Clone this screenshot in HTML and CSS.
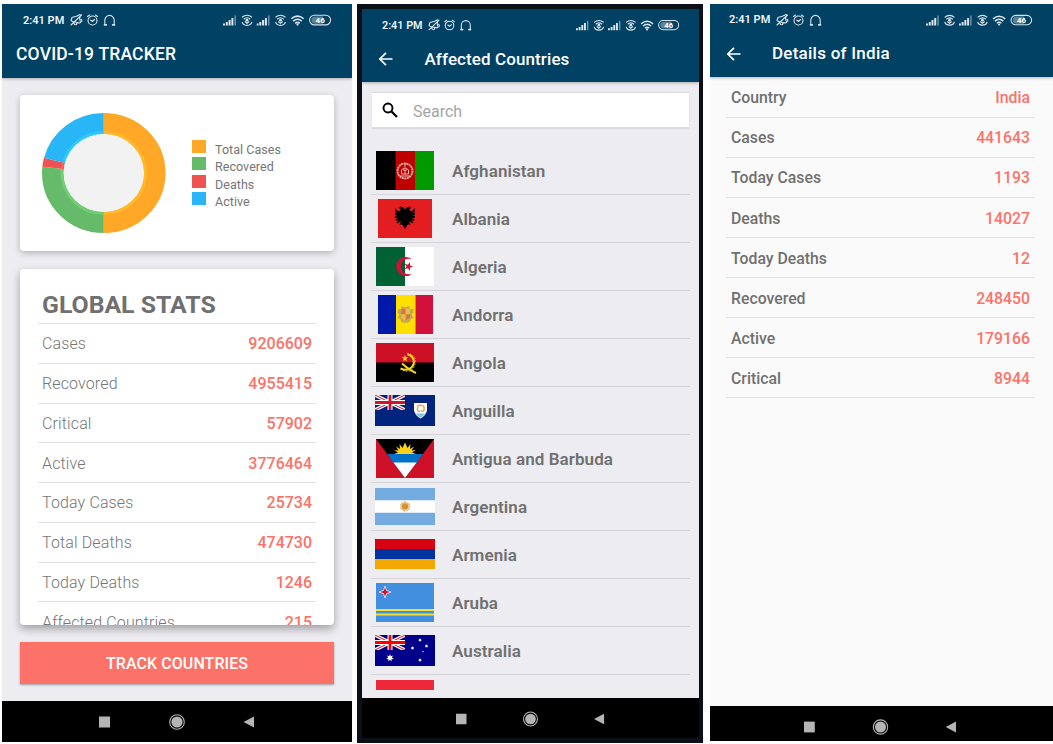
FILE: index.html
```html
<!DOCTYPE html>
<html lang="en">
<head>
<meta charset="utf-8">
<title>COVID-19 Tracker</title>
<link rel="stylesheet" href="styles.css">
</head>
<body>
<svg class="defs" aria-hidden="true">
  <symbol id="left-icons" viewBox="0 0 46 14">
    <g fill="none" stroke="#dce6eb" stroke-width="1.1" stroke-linecap="round" stroke-linejoin="round">
      <path d="M2 4.500 7 3l3-1.500.8 1L9.500 5l1 4.500-1.200.5L2.500 8.500 1 7.500zM3.500 9l1 2.500 2 .2.500-2M1 12 11.500 2M11 6.200q1.300.8.800 2.500"/>
      <circle cx="22.500" cy="7.500" r="4.500"/><path d="M17.500 3.500 19.500 2M25.500 2l2 1.500M20.700 7l1.800 1.500L24.500 6.500"/>
      <path d="M34.800 11V7.300a4.700 4.900 0 0 1 9.400 0V11"/><path d="M34.500 11.800h1.800M42.700 11.800h1.800" stroke-width="1.700"/>
    </g>
  </symbol>
  <symbol id="signal" viewBox="0 0 14 14">
    <g fill="#dce6eb"><path d="M0 10.500h2v2H0zM2.800 9h2v3.500h-2zM5.600 7h2v5.500h-2zM8.400 5h2v7.500h-2z"/><path opacity=".5" d="M11.500 2.500H13v10h-1.500z"/></g>
  </symbol>
  <symbol id="hotspot" viewBox="0 0 12 14">
    <g fill="none" stroke="#dce6eb" stroke-width="1.200"><path d="M1 4.300Q6 .2 11 4.300M2.700 6.200Q6 3.300 9.300 6.200M1.200 9Q1.800 12.300 6 12.300T10.800 9M3.800 8.500 6 10.300 8.200 8.500"/></g><circle cx="6" cy="7.200" r="1.400" fill="#dce6eb"/>
  </symbol>
  <symbol id="right-icons" viewBox="0 0 109 14">
    <use href="#signal" x="0" width="14" height="14"/>
    <use href="#hotspot" x="18" width="12" height="14"/>
    <use href="#signal" x="33.500" width="14" height="14"/>
    <use href="#hotspot" x="51.500" width="12" height="14"/>
    <g fill="none" stroke="#dce6eb" stroke-width="1.500"><path d="M68.300 5.800q6.200-5.300 12.400 0M70.200 8.100q4.300-3.700 8.600 0M72.200 10.300q2.300-1.900 4.600 0"/></g>
    <circle cx="74.500" cy="11.600" r="1.100" fill="#dce6eb"/>
    <rect x="86.600" y="2.300" width="21" height="9.600" rx="4.800" fill="none" stroke="#d7e2e8" stroke-width="1.100"/>
    <path d="M92 3.500h8v7.200h-8a3.600 3.600 0 0 1 0-7.200z" fill="#5d8298"/>
  </symbol>
  <symbol id="back" viewBox="0 0 16 16"><path d="M14.500 8H2M8 1.800 1.800 8 8 14.200" fill="none" stroke="#fff" stroke-width="1.700"/></symbol>
  <symbol id="nav" viewBox="0 0 156 18">
    <rect x="0" y="3.500" width="11" height="11" fill="#b5b5b5"/>
    <circle cx="78" cy="9" r="5.600" fill="#b5b5b5"/><circle cx="78" cy="9" r="7.300" fill="none" stroke="#b5b5b5" stroke-width="1.100"/>
    <path d="M155 3.500v11L144.500 9z" fill="#b5b5b5"/>
  </symbol>
  <symbol id="union" viewBox="0 0 30 15">
    <path d="M0 0 30 15M30 0 0 15" stroke="#fff" stroke-width="3.400"/>
    <path d="M0 0 30 15M30 0 0 15" stroke="currentColor" stroke-width="1"/>
    <path d="M15 0v15M0 7.500h30" stroke="#fff" stroke-width="5"/>
    <path d="M15 0v15M0 7.500h30" stroke="currentColor" stroke-width="2.800"/>
  </symbol>
  <symbol id="star7" viewBox="-10 -10 20 20"><path fill="#fff" d="M0-10 2-4.200 7.800-6.200 4.500-1 9.700 2.200 3.600 2.900 4.300 9 0 4.600-4.300 9-3.600 2.900-9.700 2.200-4.500-1-7.800-6.200-2-4.200z"/></symbol>
</svg>

<main class="screens">
  <section class="phone home">
    <header class="appbar">
      <div class="status"><span class="time">2:41 PM</span><svg class="left-icons"><use href="#left-icons"/></svg><svg class="right-icons" viewBox="0 0 109 14"><use href="#right-icons" width="109" height="14"/><text x="97.200" y="9.900" class="battery-text">46</text></svg></div>
      <h1 class="title">COVID-19 TRACKER</h1>
    </header>
    <div class="home-body">
      <div class="card chart-card">
        <svg class="donut" viewBox="0 0 120 120" preserveAspectRatio="none">
          <g fill="none" stroke-width="21" transform="rotate(-90 60 60)">
            <circle cx="60" cy="60" r="49.500" pathLength="360" stroke="#ffa726" stroke-dasharray="180 180"/>
            <circle cx="60" cy="60" r="49.500" pathLength="360" stroke="#66bb6a" stroke-dasharray="96 264" stroke-dashoffset="-180"/>
            <circle cx="60" cy="60" r="49.500" pathLength="360" stroke="#ef5350" stroke-dasharray="8.800 351.200" stroke-dashoffset="-276"/>
            <circle cx="60" cy="60" r="49.500" pathLength="360" stroke="#29b6f6" stroke-dasharray="75.200 284.800" stroke-dashoffset="-284.800"/>
          </g>
          <g fill="none" stroke-width="3" transform="rotate(-90 60 60)">
            <circle cx="60" cy="60" r="40.500" pathLength="360" stroke="#ffb829" stroke-dasharray="180 180"/>
            <circle cx="60" cy="60" r="40.500" pathLength="360" stroke="#70cf75" stroke-dasharray="96 264" stroke-dashoffset="-180"/>
            <circle cx="60" cy="60" r="40.500" pathLength="360" stroke="#ff5b58" stroke-dasharray="8.800 351.200" stroke-dashoffset="-276"/>
            <circle cx="60" cy="60" r="40.500" pathLength="360" stroke="#2dc8ff" stroke-dasharray="75.200 284.800" stroke-dashoffset="-284.800"/>
          </g>
          <circle cx="60" cy="60" r="39" fill="#f2f2f2"/>
        </svg>
        <ul class="legend">
          <li><i class="swatch orange"></i>Total Cases</li>
          <li><i class="swatch green"></i>Recovered</li>
          <li><i class="swatch red"></i>Deaths</li>
          <li><i class="swatch blue"></i>Active</li>
        </ul>
      </div>
      <div class="card stats-card">
        <h2 class="stats-title">GLOBAL STATS</h2>
        <dl class="rows">
          <div class="row"><dt>Cases</dt><dd>9206609</dd></div>
          <div class="row"><dt>Recovored</dt><dd>4955415</dd></div>
          <div class="row"><dt>Critical</dt><dd>57902</dd></div>
          <div class="row"><dt>Active</dt><dd>3776464</dd></div>
          <div class="row"><dt>Today Cases</dt><dd>25734</dd></div>
          <div class="row"><dt>Total Deaths</dt><dd>474730</dd></div>
          <div class="row"><dt>Today Deaths</dt><dd>1246</dd></div>
          <div class="row"><dt>Affected Countries</dt><dd>215</dd></div>
        </dl>
      </div>
      <button class="track">TRACK COUNTRIES</button>
    </div>
    <nav class="navbar"><svg class="nav-icons"><use href="#nav"/></svg></nav>
  </section>

  <section class="phone countries">
    <header class="appbar">
      <div class="status"><span class="time">2:41 PM</span><svg class="left-icons"><use href="#left-icons"/></svg><svg class="right-icons" viewBox="0 0 109 14"><use href="#right-icons" width="109" height="14"/><text x="97.200" y="9.900" class="battery-text">46</text></svg></div>
      <div class="bar-title"><svg class="back"><use href="#back"/></svg><h1 class="title">Affected Countries</h1></div>
    </header>
    <div class="countries-body">
      <div class="search"><svg class="search-icon" viewBox="0 0 16 16"><circle cx="6" cy="6" r="4.500" fill="none" stroke="#000" stroke-width="1.900"/><path d="m9.500 9.500 5.500 5.500" stroke="#000" stroke-width="2.300"/></svg><span>Search</span></div>
      <ul class="list">
        <li><span class="flag"><svg width="58" height="39" viewBox="0 0 58 39"><path d="M0 0h20v39H0z"/><path fill="#be0000" d="M19.500 0H39v39H19.500z"/><path fill="#009900" d="M39 0h19v39H39z"/><g fill="none" stroke="#e8b9b0"><circle cx="29" cy="20" r="7.500" stroke-width="1.800" stroke-dasharray="2 .6"/><path d="M25.500 23v-4q3.500-4 7 0v4zM29 13v3M24 25h10M27 19h4M29 19v4"/></g></svg></span><b>Afghanistan</b></li>
        <li><span class="flag"><svg width="54" height="39" viewBox="0 0 54 39"><path fill="#e41e20" d="M0 0h54v39H0z"/><path d="m27 10.500-1.500-2-3-1-2 1.500 2.500 1-1.500 2-1.500 0-3-3 .3 4 2.200 1.500-2.500-.5 0 2 3 1-3 0 .2 2 3-.2-2.700 1.700.5 1.500 3-1.200-2.500 3 1 .6 3.500-2.400-1.500 4 2-.8 1.500 1.300 2 3.500 2-3.500 1.500-1.300 2 .8-1.500-4 3.500 2.400 1-.6-2.500-3 3 1.200.5-1.500-2.700-1.700 3 .2.200-2-3 0 3-1 0-2-2.500.5 2.200-1.500.3-4-3 3-1.500 0-1.500-2 2.500-1-2-1.500-3 1z"/></svg></span><b>Albania</b></li>
        <li><span class="flag"><svg width="58" height="39" viewBox="0 0 58 39"><path fill="#fff" d="M0 0h58v39H0z"/><path fill="#006233" d="M0 0h29v39H0z"/><path fill="#d21034" d="M36.500 12.600a9.600 9.600 0 1 0 0 13.800 7.800 7.800 0 1 1 0-13.800z"/><path fill="#d21034" d="m37.200 19.500-3.200 1.100v3.400l-2.100-2.700-3.300 1 2-2.800-2-2.800 3.300 1 2.100-2.700v3.400z"/></svg></span><b>Algeria</b></li>
        <li><span class="flag"><svg width="55" height="39" viewBox="0 0 55 39"><path fill="#0018a8" d="M0 0h18v39H0z"/><path fill="#fedf00" d="M18 0h19.500v39H18z"/><path fill="#d0103a" d="M37.500 0H55v39H37.500z"/><path fill="#c7a850" d="M20 14h3l1-3 3.500 1.500L31 11l1 3h3.500v4l-2 1 2 4-3 1-.5 3-4.500 1-4.500-1-.5-3-3-1 2-4-2-1z"/><path fill="#d9704a" d="M23.500 14h3.500v5h-3.500zM28.500 19.500H32v3l-3.500 2.500z"/><path fill="#efbd45" d="M28 14h4v5h-4zM23.500 19.500H27V25l-3.500-2z"/></svg></span><b>Andorra</b></li>
        <li><span class="flag"><svg width="58" height="39" viewBox="0 0 58 39"><path d="M0 0h58v39H0z"/><path fill="#cc1126" d="M0 0h58v19.500H0z"/><g fill="none" stroke="#f9d616"><path d="M31.500 11.500c6 1 8.500 8 4 13q-4.500 4-11 1" stroke-width="2"/><path d="M31 10.500q10 1 8 10.500t-12 6.500" stroke-dasharray="1.500 1.500"/><path d="M26 20.500q8 7 14 9.500" stroke-width="2"/></g><path fill="#f9d616" d="m29 12 .8 2.200 2.400.1-1.900 1.500.7 2.400-2-1.300-2 1.300.7-2.400-1.900-1.500 2.400-.1z"/></svg></span><b>Angola</b></li>
        <li><span class="flag"><svg width="60" height="31" viewBox="0 0 60 31"><path fill="#00247d" d="M0 0h60v31H0z"/><use href="#union" width="30" height="15" color="#cf142b"/><path fill="#fff" d="M39 8h13v7q-.5 5-6.500 8.500Q39.500 20 39 15z"/><path fill="#83c3dd" d="M40.500 18.500h10q-2 2.500-5 4.300-3-1.800-5-4.300z"/><path d="M42 11q5-2 7 1M43 12q-2 5 2 4M49 12q1 5-3 4" fill="none" stroke="#f0a43a" stroke-width="1.500"/></svg></span><b>Anguilla</b></li>
        <li><span class="flag"><svg width="58" height="39" viewBox="0 0 58 39"><path fill="#ce1126" d="M0 0h58v39H0z"/><path d="M0 0h58L29 39z"/><path fill="#fcd116" d="m18 15 4-1.500-4-2.500 4.500.5-2.500-4 4 2.500L23.500 5l3 4L29 3.500 31.500 9l3-4-.5 5 4-2.500-2.500 4 4.500-.5-4 2.500 4 1.500z"/><path fill="#0072c6" d="M11.200 15h35.600l-6.200 9H17.400z"/><path fill="#fff" d="M17.400 23.500h23.200L29 39z"/></svg></span><b>Antigua and Barbuda</b></li>
        <li><span class="flag"><svg width="60" height="37" viewBox="0 0 60 37"><path fill="#74acdf" d="M0 0h60v37H0z"/><path fill="#fff" d="M0 12.300h60v12.400H0z"/><circle cx="30" cy="18.500" r="4.200" fill="none" stroke="#dca450" stroke-width="1.800" stroke-dasharray=".8 .5"/><circle cx="30" cy="18.500" r="3.200" fill="#d59031"/></svg></span><b>Argentina</b></li>
        <li><span class="flag"><svg width="60" height="30" viewBox="0 0 60 30"><path fill="#d90012" d="M0 0h60v10H0z"/><path fill="#0033a0" d="M0 10h60v10H0z"/><path fill="#f2a800" d="M0 20h60v10H0z"/></svg></span><b>Armenia</b></li>
        <li><span class="flag"><svg width="58" height="39" viewBox="0 0 58 39"><path fill="#418fde" d="M0 0h58v39H0z"/><path d="M0 27h58M0 31.500h58" stroke="#f4df30" stroke-width="2"/><path fill="#d21034" stroke="#fff" stroke-width=".7" d="m9 3 1.500 4.500L15 9l-4.500 1.500L9 15l-1.500-4.500L3 9l4.500-1.500z"/></svg></span><b>Aruba</b></li>
        <li><span class="flag"><svg width="60" height="31" viewBox="0 0 60 31"><path fill="#00008b" d="M0 0h60v31H0z"/><use href="#union" width="30" height="15" color="#f00"/><use href="#star7" x="11" y="19" width="8" height="8"/><use href="#star7" x="43" y="3" width="4" height="4"/><use href="#star7" x="35.500" y="11" width="4" height="4"/><use href="#star7" x="49.500" y="9" width="4" height="4"/><use href="#star7" x="43" y="23" width="4" height="4"/><use href="#star7" x="47" y="15.500" width="2" height="2"/></svg></span><b>Australia</b></li>
        <li><span class="flag"><svg width="58" height="39" viewBox="0 0 58 39"><path fill="#ed2939" d="M0 0h58v10H0z"/></svg></span></li>
      </ul>
    </div>
    <nav class="navbar"><svg class="nav-icons"><use href="#nav"/></svg></nav>
  </section>

  <section class="phone details">
    <header class="appbar">
      <div class="status"><span class="time">2:41 PM</span><svg class="left-icons"><use href="#left-icons"/></svg><svg class="right-icons" viewBox="0 0 109 14"><use href="#right-icons" width="109" height="14"/><text x="97.200" y="9.900" class="battery-text">46</text></svg></div>
      <div class="bar-title"><svg class="back"><use href="#back"/></svg><h1 class="title">Details of India</h1></div>
    </header>
    <dl class="rows details-body">
      <div class="row"><dt>Country</dt><dd>India</dd></div>
      <div class="row"><dt>Cases</dt><dd>441643</dd></div>
      <div class="row"><dt>Today Cases</dt><dd>1193</dd></div>
      <div class="row"><dt>Deaths</dt><dd>14027</dd></div>
      <div class="row"><dt>Today Deaths</dt><dd>12</dd></div>
      <div class="row"><dt>Recovered</dt><dd>248450</dd></div>
      <div class="row"><dt>Active</dt><dd>179166</dd></div>
      <div class="row"><dt>Critical</dt><dd>8944</dd></div>
    </dl>
    <nav class="navbar"><svg class="nav-icons"><use href="#nav"/></svg></nav>
  </section>
</main>
</body>
</html>
```

FILE: styles.css
```css
* { box-sizing: border-box; margin: 0; padding: 0; }
body { background: #fff; font-family: Roboto, "Liberation Sans", sans-serif; overflow: hidden; }
ul { list-style: none; }
svg { display: block; flex: none; }
.defs { width: 0; height: 0; position: absolute; }
.battery-text { font: 700 8px Roboto, sans-serif; fill: #fff; text-anchor: middle; }

.screens { display: flex; align-items: flex-start; width: 1053px; height: 744px; padding: 4px 0 0 2px; }
.phone { display: flex; flex-direction: column; flex: none; overflow: hidden; }

.appbar { background: #004164; color: #fff; flex: none; position: relative; box-shadow: 0 1px 3px rgba(0, 0, 0, .28); }
.status { display: flex; align-items: center; height: 32px; padding: 0 20px 0 21px; }
.time { font-size: 11px; font-weight: 600; color: #eef3f6; width: 47px; white-space: nowrap; }
.left-icons { width: 46px; height: 14px; }
.right-icons { width: 109px; height: 14px; margin-left: auto; }
.title { font-size: 17.500px; font-weight: 500; letter-spacing: .18px; line-height: 37px; white-space: nowrap; }
.bar-title { display: flex; align-items: center; }
.back { width: 16px; height: 16px; }

.navbar { background: #000; flex: none; display: flex; }
.nav-icons { width: 156px; height: 18px; }

.row { display: flex; justify-content: space-between; align-items: center; border-bottom: 1px solid #e2e2e2; font-size: 16px; }
.row dd { color: #fc7268; font-weight: 500; }

.home { width: 350px; height: 738px; background: #edecf1; }
.home .appbar { height: 73.500px; }
.home .title { padding-left: 14px; }
.home-body { flex: 1; padding: 17.500px 18px 0; display: flex; flex-direction: column; }
.card { background: #fff; border-radius: 4px; flex: none; }
.chart-card { height: 156px; display: flex; padding: 18px 0 0 22px; box-shadow: 0 2px 6px rgba(0, 0, 0, .25); }
.donut { width: 123.500px; height: 120px; }
.legend { padding: 27px 0 0 26.500px; font-size: 12.500px; color: #757575; }
.legend li { display: flex; align-items: flex-start; height: 17.300px; line-height: 20px; letter-spacing: .05px; }
.swatch { width: 14px; height: 13px; margin-right: 9px; }
.orange { background: #ffa726; }
.green { background: #66bb6a; }
.red { background: #ef5350; }
.blue { background: #29b6f6; }
.stats-card { height: 356px; margin-top: 18px; padding: 17px 18px 0; overflow: hidden; box-shadow: 0 4px 9px rgba(0, 0, 0, .33); }
.stats-title { font-size: 24.800px; line-height: 37px; height: 38px; padding-left: 4px; color: #707070; border-bottom: 1px solid #e2e2e2; }
.stats-card .row { height: 39.750px; padding: 1px 4px 0; }
.stats-card dt { font-weight: 300; color: #757575; letter-spacing: .13px; }
.track { height: 42px; margin-top: 17px; flex: none; border: 0; background: #fc7268; color: #fff; font: 500 16px Roboto, sans-serif; letter-spacing: .08px; box-shadow: 0 1px 2px rgba(0, 0, 0, .35); }
.home .navbar { height: 41px; padding: 11.500px 0 0 97px; }

.countries { width: 346px; height: 739px; margin-left: 5px; background: #edecf1; border: solid #0b0f17; border-width: 5px 4px 5px 5px; }
.countries .appbar { height: 73px; }
.countries .status { padding: 0 19px 0 20px; }
.countries .time { font-size: 10.800px; width: 46px; }
.countries .left-icons { width: 44px; }
.countries .right-icons { width: 104px; }
.countries .title { font-size: 17px; padding-left: 30.500px; letter-spacing: .1px; line-height: 36px; }
.countries .bar-title { padding-left: 16px; }
.countries-body { flex: 1; min-height: 0; overflow: hidden; padding: 10px 9px 0; }
.search { height: 37px; margin: 0 1px; background: #fff; border: solid #dcdcde; border-width: 1px 0 2px; display: flex; align-items: center; padding-left: 10px; gap: 15px; font-size: 16px; color: #a5a5a5; box-shadow: 0 0 1px #ccc; }
.search span { padding-top: 2px; }
.search-icon { width: 16px; height: 16px; }
.list { padding-top: 17.500px; color: #707070; font-size: 17px; height: 560px; }
.list li { display: flex; align-items: center; height: 48.050px; border-bottom: 1px solid #d3d3d8; white-space: nowrap; }
.list li:last-child { border: 0; }
.list b { font-weight: 600; padding-top: 2px; letter-spacing: .08px; }
.flag { width: 68px; margin-right: 13px; display: flex; justify-content: center; }
.countries .navbar { height: 40px; padding: 11.500px 0 0 93.500px; }
.countries .nav-icons { width: 149px; }

.details { width: 343px; height: 737px; margin-left: 7px; background: #fafafa; }
.details .appbar { height: 73px; }
.details .status { height: 31px; padding: 0 20px 0 19px; }
.details .right-icons { width: 107px; }
.details .bar-title { padding-left: 16px; }
.details .title { font-size: 17px; padding-left: 30px; letter-spacing: .25px; }
.details-body { flex: 1; padding: 0.500px 18px 0 16px; }
.details-body .row { height: 40.100px; padding: 1.500px 5px 0; color: #707070; font-weight: 500; font-size: 15.800px; }
.details .navbar { height: 35px; padding: 12px 0 0 94px; }
.details .nav-icons { width: 153px; }
```
